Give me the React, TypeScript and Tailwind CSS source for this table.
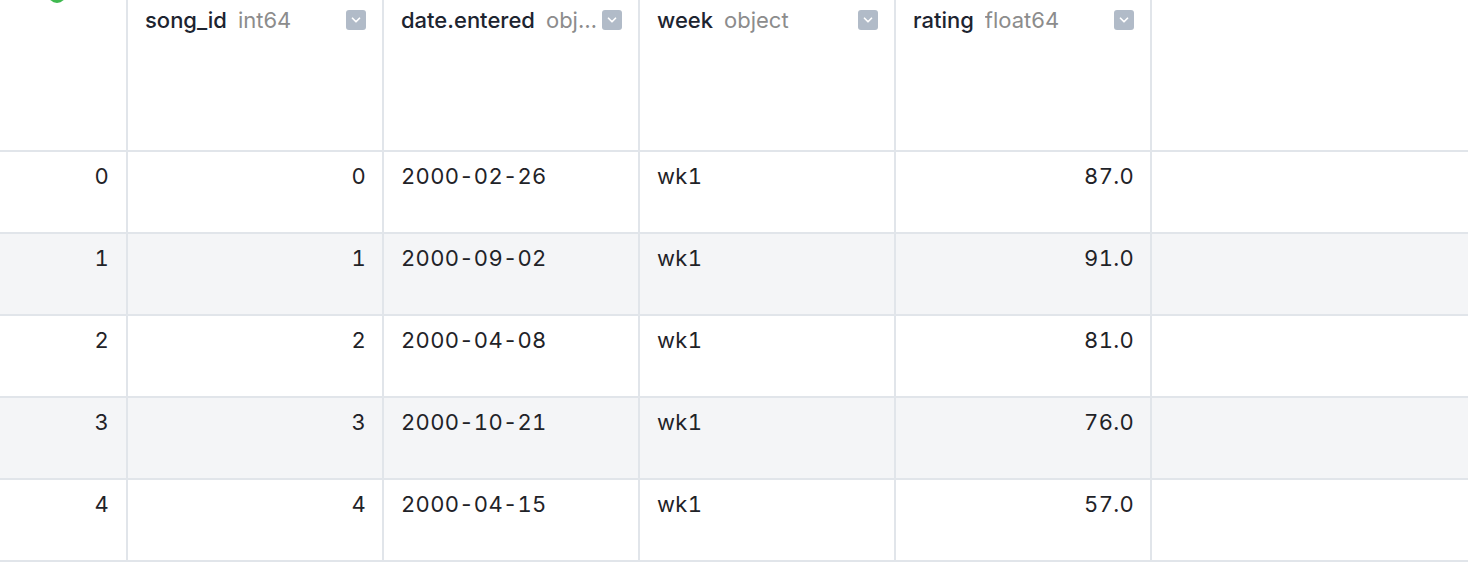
import { ChevronDown } from 'lucide-react'

type Col = { name: string; type: string; align: 'left' | 'right' }

const cols: Col[] = [
  { name: 'song_id', type: 'int64', align: 'right' },
  { name: 'date.entered', type: 'object', align: 'left' },
  { name: 'week', type: 'object', align: 'left' },
  { name: 'rating', type: 'float64', align: 'right' },
]

const rows = [
  ['0', '2000-02-26', 'wk1', '87.0'],
  ['1', '2000-09-02', 'wk1', '91.0'],
  ['2', '2000-04-08', 'wk1', '81.0'],
  ['3', '2000-10-21', 'wk1', '76.0'],
  ['4', '2000-04-15', 'wk1', '57.0'],
]

function HeaderCell({ col }: { col: Col }) {
  return (
    <div className="w-[256px] shrink-0 h-[152px] border-r-2 border-b-2 border-[#e1e5ea] flex items-start pl-[17px] pr-[16px] pt-[6px]">
      <div className="flex items-baseline min-w-0 flex-1 gap-[11px] text-[22px] leading-[28px]">
        <span className="font-medium text-[#1d2430] shrink-0">{col.name}</span>
        <span className="text-[#8c8c8c] truncate">{col.type}</span>
      </div>
      <div className="ml-[4px] mt-[4px] w-[20px] h-[20px] rounded-[3px] bg-[#b1bbc8] flex items-center justify-center shrink-0">
        <ChevronDown size={14} strokeWidth={3} color="#ffffff" />
      </div>
    </div>
  )
}

export default function App() {
  return (
    <div className="w-[1468px] h-[570px] bg-white overflow-hidden relative" style={{ fontFamily: 'Inter, "Noto Sans", sans-serif' }}>
      <div className="absolute left-[48px] top-[-15px] w-[18px] h-[18px] rounded-full bg-[#3fb950]" />
      <div className="flex">
        <div className="w-[128px] shrink-0 h-[152px] border-r-2 border-b-2 border-[#e1e5ea]" />
        {cols.map((c) => (
          <HeaderCell key={c.name} col={c} />
        ))}
        <div className="flex-1 h-[152px] border-b-2 border-[#e1e5ea]" />
      </div>
      {rows.map((r, i) => (
        <div key={i} className={`flex h-[82px] border-b-2 border-[#e1e5ea] text-[22px] text-[#1f2328] tabular-nums tracking-[0.3px] ${i % 2 === 1 ? 'bg-[#f4f5f7]' : 'bg-white'}`}>
          <div className="w-[128px] shrink-0 border-r-2 border-[#e1e5ea] text-right pr-[17px] pt-[9px] leading-[30px]">{i}</div>
          {r.map((v, j) => (
            <div
              key={j}
              className={`w-[256px] shrink-0 border-r-2 border-[#e1e5ea] pt-[9px] leading-[30px] ${cols[j].align === 'right' ? 'text-right pr-[16px]' : 'text-left pl-[17px]'}`}
            >
              {v}
            </div>
          ))}
          <div className="flex-1" />
        </div>
      ))}
    </div>
  )
}
